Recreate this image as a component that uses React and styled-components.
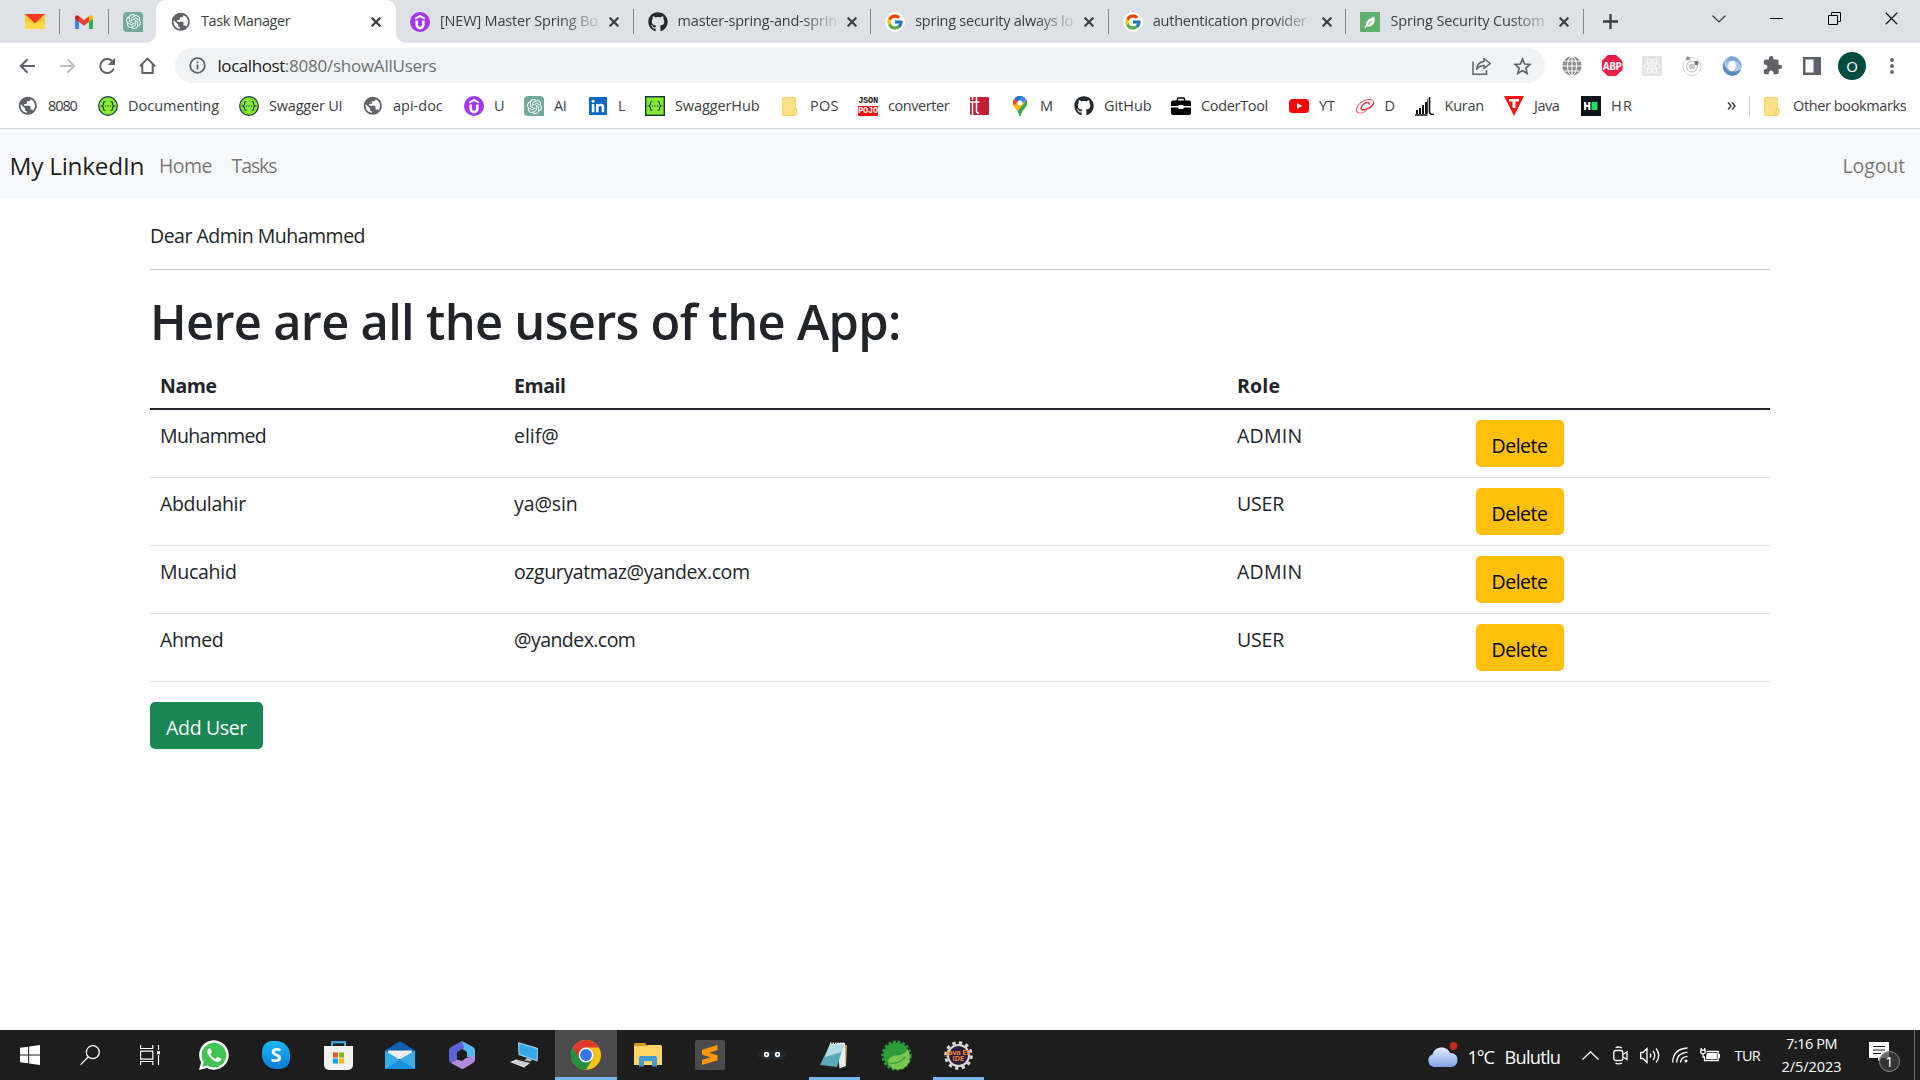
import React from "react";
import styled, { createGlobalStyle, css } from "styled-components";
import { SiOpenai, SiUdemy } from "react-icons/si";
import { FcGoogle } from "react-icons/fc";
import { FaGithub } from "react-icons/fa";
import { MdPublic, MdExtension } from "react-icons/md";

const GlobalStyle = createGlobalStyle`
  *, *::before, *::after { box-sizing: border-box; }
  body {
    margin: 0;
    font-family: "Open Sans", "Noto Sans", sans-serif;
    color: #212529;
    background: #fff;
    overflow: hidden;
  }
  svg { display: block; flex: none; }
`;

/* ---------- shared ---------- */

const Screen = styled.div`
  width: 1920px;
  height: 1080px;
  display: flex;
  flex-direction: column;
`;

const Text = styled.span`
  white-space: nowrap;
  letter-spacing: ${(p) => p.$track || 0}px;
`;

const IconBox = styled.span`
  width: ${(p) => p.$size || 20}px;
  height: ${(p) => p.$size || 20}px;
  flex: none;
  display: flex;
  align-items: center;
  justify-content: center;
  color: ${(p) => p.$color || "#5f6368"};
  background: ${(p) => p.$bg || "transparent"};
  border-radius: ${(p) => p.$radius || 0};
`;

/* ---------- browser: tab strip ---------- */

const TabStrip = styled.div`
  height: 43px;
  flex: none;
  display: flex;
  align-items: center;
  padding-left: 10px;
  background: #dee1e6;
`;

const separator = css`
  &::after {
    content: "";
    width: 1px;
    height: 25px;
    background: #80868b;
    margin-left: auto;
    flex: none;
  }
`;

const PinnedTab = styled.div`
  width: ${(p) => p.$width}px;
  height: 43px;
  flex: none;
  display: flex;
  align-items: center;
  padding-left: ${(p) => p.$pad}px;
  ${(p) => p.$divided && separator}
`;

const Tab = styled.div`
  width: 237.6px;
  height: 43px;
  flex: none;
  display: flex;
  align-items: center;
  padding-left: 14px;
  font-size: 14.5px;
  color: #3c4043;
  ${separator}
`;

const ActiveTab = styled(Tab)`
  width: 240px;
  padding-left: 15px;
  background: #fff;
  border-radius: 10px 10px 0 0;
  position: relative;
  &::before,
  &::after {
    content: "";
    position: absolute;
    bottom: 0;
    width: 10px;
    height: 10px;
  }
  &::before {
    left: -10px;
    background: radial-gradient(circle at 0 0, transparent 9.5px, #fff 10px);
  }
  &::after {
    right: -10px;
    background: radial-gradient(circle at 100% 0, transparent 9.5px, #fff 10px);
  }
`;

const TabTitle = styled(Text)`
  width: ${(p) => p.$width || 160}px;
  margin-left: 10px;
  padding-bottom: 2px;
  overflow: hidden;
  ${(p) =>
    p.$fade &&
    css`
      mask-image: linear-gradient(90deg, #000 ${p.$fade}px, rgba(0, 0, 0, 0.12) 100%);
    `}
`;

const CloseButton = styled.span`
  width: 16px;
  margin-left: ${(p) => p.$gap || 6}px;
  display: flex;
  justify-content: center;
  color: #3c4043;
`;

const NewTab = styled.div`
  width: 28px;
  margin-left: 13px;
  display: flex;
  justify-content: center;
`;

const WindowControls = styled.div`
  margin-left: auto;
  align-self: flex-start;
  display: flex;
`;

const WindowButton = styled.div`
  width: 57.3px;
  height: 37px;
  display: flex;
  align-items: center;
  justify-content: center;
`;

/* ---------- browser: toolbar ---------- */

const Toolbar = styled.div`
  height: 45px;
  flex: none;
  display: flex;
  align-items: center;
  padding-left: 7px;
  background: #fff;
`;

const ToolButton = styled.div`
  width: 40px;
  height: 40px;
  flex: none;
  display: flex;
  align-items: center;
  justify-content: center;
`;

const Omnibox = styled.div`
  width: 1370px;
  height: 35px;
  margin: 0 7px 0 8px;
  padding: 0 3px 0 14px;
  flex: none;
  display: flex;
  align-items: center;
  background: #f1f3f4;
  border-radius: 18px;
`;

const Address = styled.div`
  margin-left: 11.5px;
  flex: 1;
  font-size: 17px;
  color: #6b6f74;
  display: flex;
`;

const Host = styled(Text)`
  color: #202124;
`;

const Avatar = styled.div`
  width: 28px;
  height: 28px;
  border-radius: 50%;
  background: #004d40;
  color: #fff;
  font-size: 15px;
  display: flex;
  align-items: center;
  justify-content: center;
`;

/* ---------- browser: bookmarks ---------- */

const BookmarkBar = styled.div`
  height: 41px;
  flex: none;
  display: flex;
  align-items: center;
  padding: 0 0 4px 18px;
  background: #fff;
  border-bottom: 1px solid #d5d7db;
`;

const Bookmark = styled.div`
  width: ${(p) => p.$width}px;
  flex: none;
  display: flex;
  align-items: center;
  gap: ${(p) => p.$gap || 10}px;
  font-size: 14.5px;
  color: #3c4043;
`;

const BookmarkLabel = styled(Text)`
  padding-bottom: 1.5px;
`;

const BarDivider = styled.div`
  width: 1px;
  height: 20px;
  margin: 0 14px 0 13px;
  background: #cfd1d5;
`;

/* ---------- page ---------- */

const Page = styled.main`
  flex: 1;
  min-height: 0;
  background: #fff;
  font-size: 19.5px;
  line-height: 30px;
`;

const Navbar = styled.nav`
  height: 70px;
  display: flex;
  align-items: center;
  padding: 3px 15px 0 9.5px;
  background: #f8f9fa;
`;

const Brand = styled(Text)`
  width: 149.5px;
  font-size: 24.4px;
  color: rgba(0, 0, 0, 0.9);
`;

const NavLink = styled(Text)`
  width: ${(p) => p.$width || "auto"};
  margin-left: ${(p) => (p.$end ? "auto" : 0)};
  color: rgba(0, 0, 0, 0.55);
`;

const Container = styled.div`
  width: 1620px;
  margin: 0 auto;
  padding-top: 22px;
`;

const Rule = styled.hr`
  margin: 18px 0 21px;
  border: 0;
  height: 1px;
  background: #c8c8c9;
`;

const Heading = styled.h1`
  margin: 0 0 9px;
  font-size: 48.8px;
  font-weight: 600;
  line-height: 60px;
`;

const Row = styled.div`
  display: grid;
  grid-template-columns: 354px 723px 238.5px 1fr;
  padding-left: 10px;
  height: 68px;
  padding-top: 10px;
  border-bottom: 1px solid #dee2e6;
`;

const HeadRow = styled(Row)`
  height: 50px;
  font-weight: 700;
  border-bottom: 2px solid #212529;
`;

const Cell = styled(Text)`
  padding-top: 1px;
`;

const Button = styled.button`
  width: ${(p) => p.$width}px;
  height: 47px;
  padding: 4px 0 0;
  border: 0;
  border-radius: 5px;
  background: ${(p) => p.$bg};
  color: ${(p) => p.$color};
  font: inherit;
`;

const Actions = styled.div`
  padding-top: 20px;
`;

/* ---------- taskbar ---------- */

const Taskbar = styled.footer`
  height: 50px;
  flex: none;
  display: flex;
  background: #1d1d1d;
  color: #fff;
`;

const TaskTile = styled.div`
  width: ${(p) => p.$width || 62}px;
  height: 50px;
  flex: none;
  display: flex;
  align-items: center;
  justify-content: center;
  ${(p) =>
    p.$state === "active" &&
    css`
      background: linear-gradient(#76b5ee, #76b5ee) bottom / 100% 3px no-repeat, #4b4b4b;
    `}
  ${(p) =>
    p.$state === "open" &&
    css`
      background: linear-gradient(#76b5ee, #76b5ee) bottom / 51px 3px no-repeat;
    `}
`;

const Tray = styled.div`
  margin-left: auto;
  display: flex;
  align-items: center;
`;

const Weather = styled.div`
  width: 152px;
  display: flex;
  align-items: center;
  font-size: 18.2px;
`;

const WeatherText = styled(Text)`
  width: ${(p) => p.$width}px;
  margin-left: ${(p) => p.$gap || 0}px;
  padding-top: 3px;
`;

const TrayIcon = styled.div`
  width: ${(p) => p.$width || 30}px;
  display: flex;
  justify-content: center;
`;

const Language = styled(Text)`
  width: 53.5px;
  padding-left: 9.5px;
  font-size: 14.5px;
`;

const Clock = styled.div`
  width: 66px;
  margin-right: 21.5px;
  display: flex;
  flex-direction: column;
  align-items: center;
  font-size: 14.5px;
  line-height: 23.5px;
`;

const DesktopEdge = styled.div`
  width: 1px;
  height: 50px;
  margin: 0 5px 0 11px;
  background: #6b6b6b;
`;

/* ---------- icons ---------- */

const Globe = () => <IconBox><MdPublic size={21.6} /></IconBox>;

const Cross = ({ size = 10, w = 2.2, color = "#3c4043" }) => (
  <svg width={size} height={size} viewBox="0 0 10 10">
    <path d="M.6.6 9.4 9.4M9.4.6.6 9.4" stroke={color} strokeWidth={w} />
  </svg>
);

const Yandex = () => (
  <IconBox>
    <svg width="20" height="15" viewBox="0 0 20 15">
      <rect width="20" height="15" fill="#ffcc33" />
      <path d="M0 15V8l10 1 10-1v7z" fill="#ffdb4d" opacity=".8" />
      <path d="M0 0h20L10 9.5z" fill="#f8371c" />
    </svg>
  </IconBox>
);

const Gmail = () => (
  <IconBox>
    <svg width="18" height="14" viewBox="0 0 18 14">
      <path d="M0 2.5V13a1 1 0 0 0 1 1h3V5z" fill="#4285f4" />
      <path d="M18 2.5V13a1 1 0 0 1-1 1h-3V5z" fill="#34a853" />
      <path d="M4 1.2 9 5l5-3.8V7L9 10.8 4 7z" fill="#ea4335" />
      <path d="M0 2.4C0 .4 2.2-.6 4 .9V7L0 4z" fill="#c5221f" />
      <path d="M18 2.4c0-2-2.2-3-4-1.5V7l4-3z" fill="#fbbc04" />
    </svg>
  </IconBox>
);

const OpenAi = () => (
  <IconBox $bg="#74aa9c" $color="#fff" $radius="4px 4px 0 4px"><SiOpenai size={15} /></IconBox>
);

const Udemy = () => (
  <IconBox $bg="#a435f0" $color="#fff" $radius="50%">
    <svg width="12" height="16" viewBox="0 0 12 16" fill="none" stroke="#fff">
      <path d="M1.200 4.800 6 1.900l4.800 2.900" strokeWidth="1.900" />
      <path d="M2.700 6.500v4.300a3.300 3.300 0 0 0 6.600 0V6.500" strokeWidth="2.600" />
    </svg>
  </IconBox>
);

const Github = () => <IconBox $color="#24292e"><FaGithub size={20} /></IconBox>;

const Google = () => (
  <IconBox $bg="#fff" $radius="50%"><FcGoogle size={18} /></IconBox>
);

const Leaf = () => (
  <IconBox $bg="#5fb26e">
    <svg width="20" height="20" viewBox="0 0 20 20">
      <path d="M14.5 4.5c.5 5-.5 9-5 10-1.500.3-2.500-.1-3.200-.8C5 10 8 7 14.500 4.500z" fill="#fff" />
      <path d="M5 16 12 8.500" stroke="#5fb26e" strokeWidth="1" />
      <path d="M4.800 15.500 8 12.500" stroke="#fff" strokeWidth="1.200" />
    </svg>
  </IconBox>
);

const Swagger = ({ square }) => (
  <IconBox>
    <svg width="20" height="20" viewBox="0 0 20 20" fill="none" stroke="#173647">
      {square ? (
        <rect x=".7" y=".7" width="18.6" height="18.600" fill="#85ea2d" strokeWidth="1.400" />
      ) : (
        <circle cx="10" cy="10" r="9.300" fill="#85ea2d" strokeWidth="1.200" />
      )}
      <path d="M7.400 5.500c-1.600 0-1.900.5-1.900 1.800 0 1.500 0 2.300-1.500 2.700 1.500.4 1.500 1.200 1.500 2.700 0 1.300.3 1.800 1.900 1.800M12.600 5.500c1.600 0 1.900.5 1.900 1.800 0 1.500 0 2.300 1.500 2.700-1.500.4-1.500 1.200-1.500 2.700 0 1.300-.3 1.800-1.900 1.800" strokeWidth="1.200" />
      <path d="M7 10h1.100M9.450 10h1.100M11.900 10H13" strokeWidth="1.200" />
    </svg>
  </IconBox>
);

const LinkedIn = () => (
  <IconBox>
    <svg width="18" height="18" viewBox="0 0 18 18">
      <rect width="18" height="18" rx="1" fill="#0a66c2" />
      <path d="M2.800 7h2.600v8.300H2.800zM7 7h2.500v1.200c.5-.9 1.400-1.400 2.600-1.400 2.500 0 3.200 1.500 3.200 3.800v4.700h-2.600v-4.300c0-1.200-.2-2.100-1.400-2.100-1.300 0-1.700 1-1.700 2.100v4.300H7z" fill="#fff" />
      <circle cx="4.100" cy="4.200" r="1.500" fill="#fff" />
    </svg>
  </IconBox>
);

const Folder = () => (
  <IconBox $size={16}>
    <svg width="16" height="19" viewBox="0 0 16 19">
      <path d="M1.500.5h11a1 1 0 0 1 1 1V12h1.200v5a1.500 1.500 0 0 1-1.500 1.500H1.500a1 1 0 0 1-1-1v-16a1 1 0 0 1 1-1z" fill="#ffe08a" stroke="#f6d365" />
      <path d="M12 18v-4.500a1.500 1.500 0 0 1 3 0V17" fill="#ffe9a6" stroke="#f0c54b" strokeWidth=".8" />
    </svg>
  </IconBox>
);

const JsonBadge = styled.span`
  width: 20px;
  height: 20px;
  flex: none;
  display: grid;
  grid-template-rows: 10px 10px;
  overflow: hidden;
  text-align: center;
  font: 700 8.500px/10px "Liberation Mono", monospace;
  letter-spacing: -0.2px;
  color: #111;
  span + span { background: #f01010; color: #fff; }
`;

const Json = () => <JsonBadge><span>JSON</span><span>POJO</span></JsonBadge>;

const RedMark = () => (
  <IconBox>
    <svg width="19" height="18" viewBox="0 0 19 18">
      <rect width="19" height="18" rx="1" fill="#c01f35" />
      <path d="M0 5h9.500M2.500 0v3M2.500 6v12M6.500 0v14q0 2 2.500 2.200" stroke="#fff" strokeWidth="1.500" fill="none" />
    </svg>
  </IconBox>
);

const MapPin = () => (
  <IconBox>
    <svg width="14" height="20" viewBox="0 0 14 20">
      <defs>
        <clipPath id="pin"><path d="M7 0a7 7 0 0 1 7 7c0 4.500-5 6-6.200 12.200-.2 1-1.400 1-1.600 0C5 13 0 11.500 0 7a7 7 0 0 1 7-7z" /></clipPath>
      </defs>
      <g clipPath="url(#pin)">
        <rect width="14" height="20" fill="#34a853" />
        <path d="M0 0h7L7 7-1 14z" fill="#fbbc04" />
        <path d="M14 0v5L3 17-1 13 10 0z" fill="#fbbc04" />
        <path d="M14 4 5 15v5h9z" fill="#34a853" />
        <path d="M-1-1h10.500L5 5 1.500 9-1 8z" fill="#ea4335" />
        <path d="M3 0h11v5L9 7 6 4z" fill="#4285f4" />
        <path d="M1.500 2.500 5 5.500 9.500 0H4z" fill="#1a73e8" />
      </g>
      <circle cx="7" cy="7" r="2.500" fill="#fff" />
    </svg>
  </IconBox>
);

const Toolbox = () => (
  <IconBox>
    <svg width="20" height="18" viewBox="0 0 20 18">
      <path d="M6.500 4V1.800Q6.500 1 7.300 1h5.400q.8 0 .8.800V4" fill="none" stroke="#000" strokeWidth="1.500" />
      <path d="M2 3.500h16a2 2 0 0 1 2 2V9h-7.500V8h-5v1H0V5.500a2 2 0 0 1 2-2zM0 10.500h7.500V12h5v-1.500H20V16a2 2 0 0 1-2 2H2a2 2 0 0 1-2-2z" />
    </svg>
  </IconBox>
);

const YouTube = () => (
  <IconBox>
    <svg width="20" height="14" viewBox="0 0 20 14">
      <rect width="20" height="14" rx="3.500" fill="#f00" />
      <path d="M8 4v6l5.200-3z" fill="#fff" />
    </svg>
  </IconBox>
);

const RedSwirl = () => (
  <IconBox>
    <svg width="20" height="16" viewBox="0 0 20 16" fill="none" stroke="#e5343f">
      <path d="M18.500 6C20 1 13 .3 7.500 3.500S-.5 13 3 14.800" strokeWidth="1" />
      <path d="M14 6.500c.8-2.500-3-2.500-5.500-.2s-3.300 5.500-.7 5.600C13 12 18 8 18.800 5" strokeWidth="1.500" />
      <path d="M3 14.800c3 .8 6-.5 8.500-2" strokeWidth=".7" />
    </svg>
  </IconBox>
);

const Calligraphy = () => (
  <IconBox>
    <svg width="19" height="20" viewBox="0 0 19 20" fill="none" stroke="#111">
      <path d="M2 14v4M5 12v6M8 9v9M11 6v12" strokeWidth="2" />
      <path d="M14.500 1v15q0 2.500 4.500 2.500M0 19h12.500" strokeWidth="1.600" />
      <path d="M12.500 3v15" strokeWidth=".8" />
    </svg>
  </IconBox>
);

const RedTriangle = () => (
  <IconBox>
    <svg width="20" height="20" viewBox="0 0 20 20">
      <path d="M0 0h20L10 20z" fill="#fb1212" />
      <path d="M5 3h10v2.600h-3.500V12h-3V5.600H5z" fill="#fff" />
    </svg>
  </IconBox>
);

const HackerRank = () => (
  <IconBox $bg="#0e141e">
    <svg width="14" height="8" viewBox="0 0 14 8">
      <path d="M0 0h2.200v2.800h2V0h2.200v8H4.200V5h-2v3H0z" fill="#fff" />
      <rect x="7.500" width="6" height="8" fill="#1ee35a" />
    </svg>
  </IconBox>
);

const stroke = { fill: "none", stroke: "#5f6368", strokeWidth: 2 };

const Arrow = ({ dim, flip }) => (
  <svg width="17" height="16" viewBox="0 0 17 16" {...stroke} stroke={dim ? "#bdc1c6" : "#5f6368"}>
    <path d={flip ? "M1 8h14M8.500 1.300 15.200 8l-6.700 6.700" : "M16 8H2M8.500 1.300 1.800 8l6.700 6.700"} />
  </svg>
);

const Reload = () => (
  <svg width="18" height="18" viewBox="0 0 18 18">
    <path d="M14.300 4.200A7 7 0 1 0 15.800 11.500" {...stroke} />
    <path d="M17 .8V8H9.800z" fill="#5f6368" />
  </svg>
);

const HomeIcon = () => (
  <svg width="17" height="18" viewBox="0 0 17 18" {...stroke}>
    <path d="M1 9.200 8.500 1.600 16 9.200M3.300 7.500V16h10.400V7.500" />
  </svg>
);

const InfoIcon = () => (
  <svg width="17" height="17" viewBox="0 0 17 17">
    <circle cx="8.500" cy="8.500" r="7.300" {...stroke} strokeWidth="1.800" />
    <path d="M8.500 7.500v5M8.500 4.400v1.800" stroke="#5f6368" strokeWidth="1.800" />
  </svg>
);

const ShareIcon = () => (
  <svg width="20" height="18" viewBox="0 0 20 18" {...stroke} strokeWidth="1.500">
    <path d="M1 4.500v12.700h13.500V13" />
    <path d="M12 1.500 18.300 6.500 12 11.300V8.400c-3.500 0-5.700 1.300-7.300 4C5 8 7.500 5 12 4.500z" strokeLinejoin="round" />
  </svg>
);

const StarIcon = () => (
  <svg width="19" height="18" viewBox="0 0 19 18" {...stroke} strokeWidth="1.700">
    <path d="m9.500 2 2.100 5 5.300.5-4 3.600 1.200 5.300-4.600-2.800-4.600 2.800 1.200-5.300-4-3.600 5.300-.5z" />
  </svg>
);

const WireGlobe = () => (
  <svg width="20" height="20" viewBox="0 0 20 20" fill="none" stroke="#fff" strokeWidth="1">
    <circle cx="10" cy="10" r="9.700" fill="#8f8f8f" stroke="none" />
    <ellipse cx="10" cy="10" rx="4.500" ry="9.500" />
    <path d="M10 0v20M0 10h20M2 5h16M2 15h16" />
  </svg>
);

const AbpBadge = styled.span`
  width: 21px;
  height: 21px;
  display: flex;
  align-items: center;
  justify-content: center;
  clip-path: polygon(30% 0, 70% 0, 100% 30%, 100% 70%, 70% 100%, 30% 100%, 0 70%, 0 30%);
  background: #ed1e45;
  color: #fff;
  font-size: 10px;
  font-weight: 700;
  letter-spacing: -0.5px;
`;

const ReactDim = () => (
  <svg width="20" height="20" viewBox="0 0 20 20" fill="none" stroke="#fafafa" strokeWidth=".9">
    <rect width="20" height="20" rx="1" fill="#e2e2e2" stroke="none" />
    <ellipse cx="10" cy="10" rx="8" ry="3" />
    <ellipse cx="10" cy="10" rx="8" ry="3" transform="rotate(60 10 10)" />
    <ellipse cx="10" cy="10" rx="8" ry="3" transform="rotate(120 10 10)" />
    <circle cx="10" cy="10" r="1.300" />
  </svg>
);

const Orbit = () => (
  <svg width="20" height="20" viewBox="0 0 20 20" fill="none" stroke="#d0d0d0">
    <circle cx="10" cy="10.500" r="9" />
    <circle cx="10" cy="10.500" r="5.500" stroke="#b8b8b8" />
    <circle cx="10" cy="10.500" r="3" fill="#c8c8c8" stroke="none" />
    <circle cx="6" cy="2.500" r="2" fill="#8c8c8c" stroke="none" />
    <circle cx="14.500" cy="7" r="2.200" fill="#777" stroke="none" />
  </svg>
);

const BlueRing = () => (
  <svg width="20" height="20" viewBox="0 0 20 20">
    <circle cx="10" cy="10" r="9.800" fill="#b4cbe6" />
    <path d="M10 19.800C2 19 -1 11 2.500 5.500 2 11 6 15.500 12 15.500c3.500 0 5.500-1 7-2.500-1.500 4.500-5 7-9 6.800z" fill="#5b8bc2" />
    <path d="M8 .4C15-.5 20.500 6 19 12.500 18.500 7 14.500 4 9 4.800 7 5 5.500 6 4.500 7.500 4 4 5.500 1.500 8 .4z" fill="#7fa5d2" />
    <ellipse cx="10" cy="10" rx="3.800" ry="5.300" fill="#fff" transform="rotate(12 10 10)" />
  </svg>
);

const SidePanel = () => (
  <svg width="18" height="18" viewBox="0 0 18 18">
    <path d="M0 0h18v18H0zM2.500 2.500v13h8v-13z" fillRule="evenodd" fill="#5f6368" />
  </svg>
);

const Dots = () => (
  <svg width="4" height="16" viewBox="0 0 4 16" fill="#5f6368">
    <circle cx="2" cy="2" r="1.900" /><circle cx="2" cy="8" r="1.900" /><circle cx="2" cy="14" r="1.900" />
  </svg>
);

/* taskbar icons */

const WindowsLogo = () => (
  <svg width="20" height="20" viewBox="0 0 20 20" fill="#fff">
    <path d="M0 2.800 8.200 1.700V9.500H0zM9.200 1.500 20 0v9.500H9.200zM0 10.500h8.200v7.800L0 17.200zM9.200 10.500H20V20L9.200 18.500z" />
  </svg>
);

const SearchIcon = () => (
  <svg width="20" height="20" viewBox="0 0 20 20" fill="none" stroke="#fff" strokeWidth="1.300">
    <circle cx="12.800" cy="7.200" r="6.500" /><path d="M8.200 12 .5 19.600" />
  </svg>
);

const TaskView = () => (
  <svg width="21" height="20" viewBox="0 0 21 20" fill="none" stroke="#fff" strokeWidth="1.200">
    <path d="M.6 0v3.500h12.200V0M.6 20v-3.500h12.200V20M.6 6.200h12.200v8H.6zM18.500 0v5M18.500 10v10" />
    <path d="M17 6.200h3v3h-3z" fill="#fff" stroke="none" />
  </svg>
);

const WhatsApp = () => (
  <svg width="30" height="30" viewBox="0 0 30 30">
    <path d="M0 30l2.100-7.600A14.800 14.800 0 1 1 7.800 28z" fill="#fff" />
    <path d="M3.300 26.700 4.700 21.800A12.300 12.300 0 1 1 8.300 25.400z" fill="#40c351" />
    <path d="M10.800 8.300c-.6-.1-2.800 1-2.500 3.800.5 4.500 6.500 9.800 10.700 9.800 2.200 0 3.400-1.700 3.300-3.100 0-.3-3.400-2-3.800-1.900-.6.2-1.400 1.900-1.900 1.900-1.500 0-5.100-3.500-5.200-4.600 0-.6 1.400-1.400 1.400-2 0-.8-1.200-3.700-2-3.900z" fill="#fff" />
  </svg>
);

const SkypeShape = styled.div`
  width: 28px;
  height: 28px;
  display: flex;
  align-items: center;
  justify-content: center;
  border-radius: 10px 14px 10px 14px;
  background: linear-gradient(#1cb7f5, #0a7fd6);
  font-size: 20px;
  font-weight: 700;
  line-height: 1;
`;

const Store = () => (
  <svg width="29" height="29" viewBox="0 0 29 29">
    <path d="M8 6V1.200h13V6" fill="none" stroke="#39b5e8" strokeWidth="2" />
    <path d="M0 5h29v19a5 5 0 0 1-5 5H5a5 5 0 0 1-5-5z" fill="#f1f1f1" />
    <path d="M9 11.500h5v5H9z" fill="#f25022" /><path d="M15 11.500h5v5h-5z" fill="#7fba00" />
    <path d="M9 17.500h5v5H9z" fill="#00a4ef" /><path d="M15 17.500h5v5h-5z" fill="#ffb900" />
  </svg>
);

const Mail = () => (
  <svg width="30" height="28" viewBox="0 0 30 28">
    <path d="M0 9.500 15 0l15 9.500V12H0z" fill="#0f5fb4" />
    <path d="M3 9.500h24V18H3z" fill="#eee" />
    <path d="M0 9.500 15 19 30 9.500V28H0z" fill="#34aeea" />
    <path d="M0 28 30 9.500V28z" fill="#1c8fdc" />
    <path d="M15 19 30 28V9.500z" fill="#4fc0f5" opacity=".6" />
  </svg>
);

const Office = () => (
  <svg width="26" height="28" viewBox="0 0 26 28">
    <path d="M13 0 24 6q2 1.200 2 3.500V17l-8-1V11l-6-4-8 5z" fill="#58b8ee" />
    <path d="M13 0 2 6Q0 7.200 0 9.500v9Q0 21 2 22l6-3.500V11l7-4z" fill="#5a62d8" />
    <path d="M2 22l10 5.600q1.500.6 3 0L24 22q2-1.300 2-3.500V15l-9 2-4 3-5-1.500z" fill="#b18be0" />
    <path d="m13 9.800 4.300 2.300v4.200L13 18.600l-4.300-2.300v-4.200z" fill="#1d1d1d" />
  </svg>
);

const ThisPc = () => (
  <svg width="28" height="26" viewBox="0 0 28 26">
    <path d="M8 0l20 6-.3 13.500L8.500 13z" fill="#9cd2f0" />
    <path d="M9.200 1.500 27 7l-.3 11L9.500 12z" fill="#35a9ec" />
    <path d="m17 16 5 1.800-1.500 1.700-6-1z" fill="#b6bfc7" />
    <path d="M0 20l6-2.500L20 21l-6 4.500z" fill="#e2e6ea" />
    <path d="m4 20 11 3M7 18.800l10 2.500" stroke="#8c959d" strokeWidth=".6" />
  </svg>
);

const Chrome = () => (
  <svg width="30" height="30" viewBox="0 0 30 30">
    <circle cx="15" cy="15" r="15" fill="#fbc116" />
    <path d="M15 15 2 7.500A15 15 0 0 0 15 30l6.500-11.300z" fill="#24903f" />
    <path d="M2 7.500A15 15 0 0 1 28 7.500H15L8.500 18.800z" fill="#dc3a2f" />
    <circle cx="15" cy="15" r="7.400" fill="#fff" /><circle cx="15" cy="15" r="5.900" fill="#3577e8" />
  </svg>
);

const Explorer = () => (
  <svg width="28" height="24" viewBox="0 0 28 24">
    <path d="M0 1.500Q0 0 1.500 0H11l2.500 3H0z" fill="#d99a12" />
    <path d="M0 3h12.500l1.500-1H26.500Q28 2 28 3.500V22H0z" fill="#ffd565" />
    <path d="M5 23.500V15q0-2 2-2h14q2 0 2 2v8.500h-5V18h-8v5.500z" fill="#4296d2" />
  </svg>
);

const Sublime = () => (
  <svg width="30" height="30" viewBox="0 0 30 30">
    <rect width="30" height="30" rx="2" fill="#4b4b4b" />
    <path d="M7 9.800 22.500 5v5l-8.500 2.700 8.500 2.500v5L7 25v-5l8.500-2.700L7 14.800z" fill="#ff9800" />
  </svg>
);

const Eyes = () => (
  <svg width="30" height="14" viewBox="0 0 30 14">
    <path d="M0 7q3-5 8-5h14q5 0 8 5-3 5-8 5H8q-5 0-8-5z" fill="#22262d" />
    <g fill="#222" stroke="#fff" strokeWidth="1.800"><circle cx="9.500" cy="6.500" r="1.800" /><circle cx="20.500" cy="6.500" r="1.800" /></g>
  </svg>
);

const Notepad = () => (
  <svg width="28" height="27" viewBox="0 0 28 27">
    <path d="M20 2.500 27 3 26 24l-6 2z" fill="#c9a25c" />
    <path d="M17 1h8l.5 23-6 2.500z" fill="#e9eff2" />
    <path d="M10 2 24 2 17 25 0 23z" fill="#5aa9b8" />
    <path d="M10 2h14l-2.500 8L5 15z" fill="#b6dde3" />
    <path d="M10 1.500h15" stroke="#f4f4f4" strokeWidth="2" strokeDasharray="1.500 1" />
  </svg>
);

const SpringTool = () => (
  <svg width="31" height="31" viewBox="0 0 31 31">
    <circle cx="15.500" cy="15.500" r="13" fill="#2f9c3c" />
    <circle cx="15.500" cy="15.500" r="13.800" fill="none" stroke="#2f9c3c" strokeWidth="2.600" strokeDasharray="2.800 1.900" />
    <path d="M26.500 9.500C30 15 30.500 24.500 22 28.500c-5 2-11 1-14-3.500-2.500-5 1-9 7-9.500 6-.5 9.500-2 11.500-6z" fill="#7ac74f" />
    <path d="M8.500 23.500c7 .3 12.500-1.700 16-7" fill="none" stroke="#2f9c3c" strokeWidth="1.300" />
  </svg>
);

const GearBadge = styled.div`
  display: grid;
  place-items: center;
  > * { grid-area: 1 / 1; }
  div {
    font-size: 7.5px;
    font-weight: 700;
    line-height: 6.500px;
    text-align: center;
    color: #f08030;
    white-space: pre;
    letter-spacing: -0.3px;
  }
`;

const EclipseEe = () => (
  <GearBadge>
    <svg width="29" height="29" viewBox="0 0 29 29">
      <circle cx="14.500" cy="14.500" r="12.800" fill="none" stroke="#d8d8d8" strokeWidth="3" strokeDasharray="3.400 3.300" />
      <circle cx="14.500" cy="14.500" r="10.500" fill="#2a1f3d" stroke="#d8d8d8" strokeWidth="2" />
    </svg>
    <div>{"Java EE\nIDE"}</div>
  </GearBadge>
);

const Cloud = () => (
  <svg width="32" height="26" viewBox="0 0 32 26">
    <defs>
      <linearGradient id="cloud" x2="0" y2="1"><stop offset="0" stopColor="#e6eefc" /><stop offset="1" stopColor="#7fa3e8" /></linearGradient>
    </defs>
    <path d="M7 25a6.500 6.500 0 0 1-1.500-12.500C6.500 8 10.500 5.500 14.500 5.500c4.500 0 7.500 2.500 8.800 5.500C28 11 30.500 14 30.500 18c0 4-2.500 7-6.500 7z" fill="url(#cloud)" />
    <circle cx="26.500" cy="4" r="3.900" fill="#c42b1c" />
  </svg>
);

const TraySvg = styled.svg.attrs({ fill: "none", stroke: "#fff" })`
  stroke-width: 1.300;
`;

const Camera = () => (
  <TraySvg width="15" height="19" viewBox="0 0 15 19">
    <rect x=".8" y="4.500" width="9" height="10" rx="2" /><path d="M10 8.500 14 6v7.500L10 11M2.500 1.800Q5.500.2 9 1.800M2.500 17.200q3 1.500 6.500 0" />
  </TraySvg>
);
const Speaker = () => (
  <TraySvg width="21" height="17" viewBox="0 0 21 17">
    <path d="M.7 5.500H3l4-4v14l-4-4H.700zM10 6.500q1.500 2 0 4M13 4q3.500 4.500 0 9M16 1.500q5.500 7 0 14" />
  </TraySvg>
);
const Wifi = () => (
  <TraySvg width="16" height="16" viewBox="0 0 16 16">
    <path d="M.7 15.500Q1 2 15.500 1M4.500 15.500Q5 6 15.500 5.200M8.500 15.500q.3-5.500 7-6.200" /><circle cx="14" cy="14" r="1.500" fill="#fff" stroke="none" />
  </TraySvg>
);
const Battery = () => (
  <TraySvg width="20" height="14" viewBox="0 0 20 14">
    <path d="M6.500 3.500h11.700v9H4.500V9M19.300 6v4M1.300 0v2M4.700 0v2M.8 2.200h4.400v2q0 1.500-2.200 1.500T.8 4.200zM3 6v3h2" />
    <path d="M7 5h9.800v6H6.200V8z" fill="#fff" stroke="none" />
  </TraySvg>
);

const Notice = styled.div`
  display: grid;
  width: 31px;
  height: 30px;
  margin-top: 4px;
  > svg { grid-area: 1 / 1; }
`;

const NoticeCount = styled.span`
  grid-area: 1 / 1;
  align-self: end;
  justify-self: end;
  width: 21px;
  height: 21px;
  border: 1px solid #8a8a8a;
  border-radius: 50%;
  background: rgba(60, 60, 60, 0.75);
  font-size: 14.5px;
  line-height: 19px;
  text-align: center;
`;

/* ---------- data ---------- */

const tabs = [
  { icon: <Udemy />, title: "[NEW] Master Spring Bo", track: -0.18 },
  { icon: <Github />, title: "master-spring-and-sprin", track: -0.2 },
  { icon: <Google />, title: "spring security always lo", track: -0.25 },
  { icon: <Google />, title: "authentication provider", track: -0.25 },
  { icon: <Leaf />, title: "Spring Security Custom", track: -0.13 },
];

const bookmarks = [
  { icon: <Globe />, label: "8080", width: 80, track: -1.1 },
  { icon: <Swagger />, label: "Documenting", width: 141, track: 0 },
  { icon: <Swagger />, label: "Swagger UI", width: 124, track: -0.2 },
  { icon: <Globe />, label: "api-doc", width: 101, track: 0 },
  { icon: <Udemy />, label: "U", width: 60 },
  { icon: <OpenAi />, label: "AI", width: 64, track: -0.4 },
  { icon: <LinkedIn />, label: "L", width: 57 },
  { icon: <Swagger square />, label: "SwaggerHub", width: 137, track: -0.1 },
  { icon: <Folder />, label: "POS", width: 76, track: 0.2, gap: 12 },
  { icon: <Json />, label: "converter", width: 111.5, track: -0.44 },
  { icon: <RedMark />, label: "", width: 40.5 },
  { icon: <MapPin />, label: "M", width: 64 },
  { icon: <Github />, label: "GitHub", width: 97, track: -0.04 },
  { icon: <Toolbox />, label: "CoderTool", width: 118, track: -0.33 },
  { icon: <YouTube />, label: "YT", width: 65.5, track: -0.2 },
  { icon: <RedSwirl />, label: "D", width: 60 },
  { icon: <Calligraphy />, label: "Kuran", width: 89.5, track: -0.25 },
  { icon: <RedTriangle />, label: "Java", width: 77, track: -0.48 },
  { icon: <HackerRank />, label: "HR", width: 146, track: 1.2 },
];

const users = [
  { name: ["Muhammed", -0.65], email: ["elif@", 0], role: ["ADMIN", 0.25] },
  { name: ["Abdulahir", -0.33], email: ["ya@sin", -0.1], role: ["USER", -0.2] },
  { name: ["Mucahid", -0.28], email: ["ozguryatmaz@yandex.com", -0.4], role: ["ADMIN", 0.25] },
  { name: ["Ahmed", -0.37], email: ["@yandex.com", -0.55], role: ["USER", -0.2] },
];

const tasks = [
  { icon: <WhatsApp /> },
  { icon: <SkypeShape>S</SkypeShape> },
  { icon: <Store /> },
  { icon: <Mail /> },
  { icon: <Office /> },
  { icon: <ThisPc /> },
  { icon: <Chrome />, state: "active" },
  { icon: <Explorer /> },
  { icon: <Sublime /> },
  { icon: <Eyes /> },
  { icon: <Notepad />, state: "open" },
  { icon: <SpringTool /> },
  { icon: <EclipseEe />, state: "open" },
];

/* ---------- sections ---------- */

const BrowserTabs = () => (
  <TabStrip>
    <PinnedTab $width={50} $pad={15} $divided><Yandex /></PinnedTab>
    <PinnedTab $width={49} $pad={14} $divided><Gmail /></PinnedTab>
    <PinnedTab $width={47} $pad={14}><OpenAi /></PinnedTab>
    <ActiveTab>
      <Globe />
      <TabTitle $width={159} $track={-0.42}>Task Manager</TabTitle>
      <CloseButton $gap={8}><Cross /></CloseButton>
    </ActiveTab>
    {tabs.map((t) => (
      <Tab key={t.title}>
        {t.icon}
        <TabTitle $fade={120} $track={t.track}>{t.title}</TabTitle>
        <CloseButton><Cross /></CloseButton>
      </Tab>
    ))}
    <NewTab>
      <svg width="15" height="15" viewBox="0 0 15 15"><path d="M7.500 0v15M0 7.500h15" stroke="#3c4043" strokeWidth="2.300" /></svg>
    </NewTab>
    <WindowControls>
      <WindowButton>
        <svg width="14" height="8" viewBox="0 0 14 8"><path d="M.5.500 7 7 13.500.500" fill="none" stroke="#333" strokeWidth="1.100" /></svg>
      </WindowButton>
      <WindowButton>
        <svg width="13" height="1" viewBox="0 0 13 1"><path d="M0 0h13v1H0z" /></svg>
      </WindowButton>
      <WindowButton>
        <svg width="13" height="13" viewBox="0 0 13 13"><path d="M.5 3.500h9v9h-9zM3.500 3V.500h9v9H10" fill="none" stroke="#000" /></svg>
      </WindowButton>
      <WindowButton><Cross size={13} w={0.9} color="#111" /></WindowButton>
    </WindowControls>
  </TabStrip>
);

const BrowserToolbar = () => (
  <Toolbar>
    <ToolButton><Arrow /></ToolButton>
    <ToolButton><Arrow flip dim /></ToolButton>
    <ToolButton><Reload /></ToolButton>
    <ToolButton><HomeIcon /></ToolButton>
    <Omnibox>
      <InfoIcon />
      <Address>
        <Host $track={-0.44}>localhost</Host>
        <Text $track={-0.24}>:8080/showAllUsers</Text>
      </Address>
      <ToolButton><ShareIcon /></ToolButton>
      <ToolButton><StarIcon /></ToolButton>
    </Omnibox>
    <ToolButton><WireGlobe /></ToolButton>
    <ToolButton><AbpBadge>ABP</AbpBadge></ToolButton>
    <ToolButton><ReactDim /></ToolButton>
    <ToolButton><Orbit /></ToolButton>
    <ToolButton><BlueRing /></ToolButton>
    <ToolButton><MdExtension size={21} color="#5f6368" /></ToolButton>
    <ToolButton><SidePanel /></ToolButton>
    <ToolButton><Avatar>O</Avatar></ToolButton>
    <ToolButton><Dots /></ToolButton>
  </Toolbar>
);

const Bookmarks = () => (
  <BookmarkBar>
    {bookmarks.map((b, i) => (
      <Bookmark key={i} $width={b.width} $gap={b.gap}>
        {b.icon}
        {b.label && <BookmarkLabel $track={b.track}>{b.label}</BookmarkLabel>}
      </Bookmark>
    ))}
    <svg width="9" height="8" viewBox="0 0 9 8"><path d="M1 .5 4 4 1 7.500M5 .5 8 4 5 7.500" fill="none" stroke="#3c4043" strokeWidth="1.500" /></svg>
    <BarDivider />
    <Bookmark $gap={13}>
      <Folder />
      <BookmarkLabel $track={-0.39}>Other bookmarks</BookmarkLabel>
    </Bookmark>
  </BookmarkBar>
);

const UsersPage = () => (
  <Page>
    <Navbar>
      <Brand $track={-0.26}>My LinkedIn</Brand>
      <NavLink $width="72.500px" $track={-0.55}>Home</NavLink>
      <NavLink $track={-1.1}>Tasks</NavLink>
      <NavLink $end $track={-0.1}>Logout</NavLink>
    </Navbar>
    <Container>
      <Text as="div" $track={-0.5}>Dear Admin Muhammed</Text>
      <Rule />
      <Heading><Text $track={-0.69}>Here are all the users of the App:</Text></Heading>
      <HeadRow>
        <Cell $track={-0.45}>Name</Cell>
        <Cell $track={-0.42}>Email</Cell>
        <Cell $track={0.2}>Role</Cell>
      </HeadRow>
      {users.map((u) => (
        <Row key={u.name[0]}>
          <Cell $track={u.name[1]}>{u.name[0]}</Cell>
          <Cell $track={u.email[1]}>{u.email[0]}</Cell>
          <Cell $track={u.role[1]}>{u.role[0]}</Cell>
          <Button $width={88} $bg="#ffc107" $color="#000"><Text $track={-0.5}>Delete</Text></Button>
        </Row>
      ))}
      <Actions>
        <Button $width={113} $bg="#198754" $color="#fff"><Text $track={-0.36}>Add User</Text></Button>
      </Actions>
    </Container>
  </Page>
);

const SystemBar = () => (
  <Taskbar>
    <TaskTile $width={60}><WindowsLogo /></TaskTile>
    <TaskTile $width={60}><SearchIcon /></TaskTile>
    <TaskTile $width={61}><TaskView /></TaskTile>
    <TaskTile $width={2} />
    {tasks.map((t, i) => (
      <TaskTile key={i} $state={t.state}>{t.icon}</TaskTile>
    ))}
    <Tray>
      <Weather>
        <TrayIcon $width={40}><Cloud /></TrayIcon>
        <WeatherText $width={37} $gap={4.5} $track={-1.1}>1°C</WeatherText>
        <WeatherText $width={60} $track={-0.75}>Bulutlu</WeatherText>
      </Weather>
      <TrayIcon>
        <svg width="17" height="9" viewBox="0 0 17 9"><path d="M.5 8.500 8.500.800l8 7.700" fill="none" stroke="#fff" strokeWidth="1.300" /></svg>
      </TrayIcon>
      <TrayIcon><Camera /></TrayIcon>
      <TrayIcon><Speaker /></TrayIcon>
      <TrayIcon><Wifi /></TrayIcon>
      <TrayIcon><Battery /></TrayIcon>
      <Language $track={-0.6}>TUR</Language>
      <Clock>
        <Text $track={-0.45}>7:16 PM</Text>
        <Text $track={-0.05}>2/5/2023</Text>
      </Clock>
      <TrayIcon $width={37}>
        <Notice>
          <svg width="20" height="19" viewBox="0 0 20 19"><path d="M0 0h20v16h-7l-4 3v-3H0z" fill="#fff" /><path d="M4 4.500h12M4 8h12M4 11.500h8" stroke="#1d1d1d" strokeWidth="1.200" /></svg>
          <NoticeCount>1</NoticeCount>
        </Notice>
      </TrayIcon>
      <DesktopEdge />
    </Tray>
  </Taskbar>
);

export default function App() {
  return (
    <Screen>
      <GlobalStyle />
      <BrowserTabs />
      <BrowserToolbar />
      <Bookmarks />
      <UsersPage />
      <SystemBar />
    </Screen>
  );
}
